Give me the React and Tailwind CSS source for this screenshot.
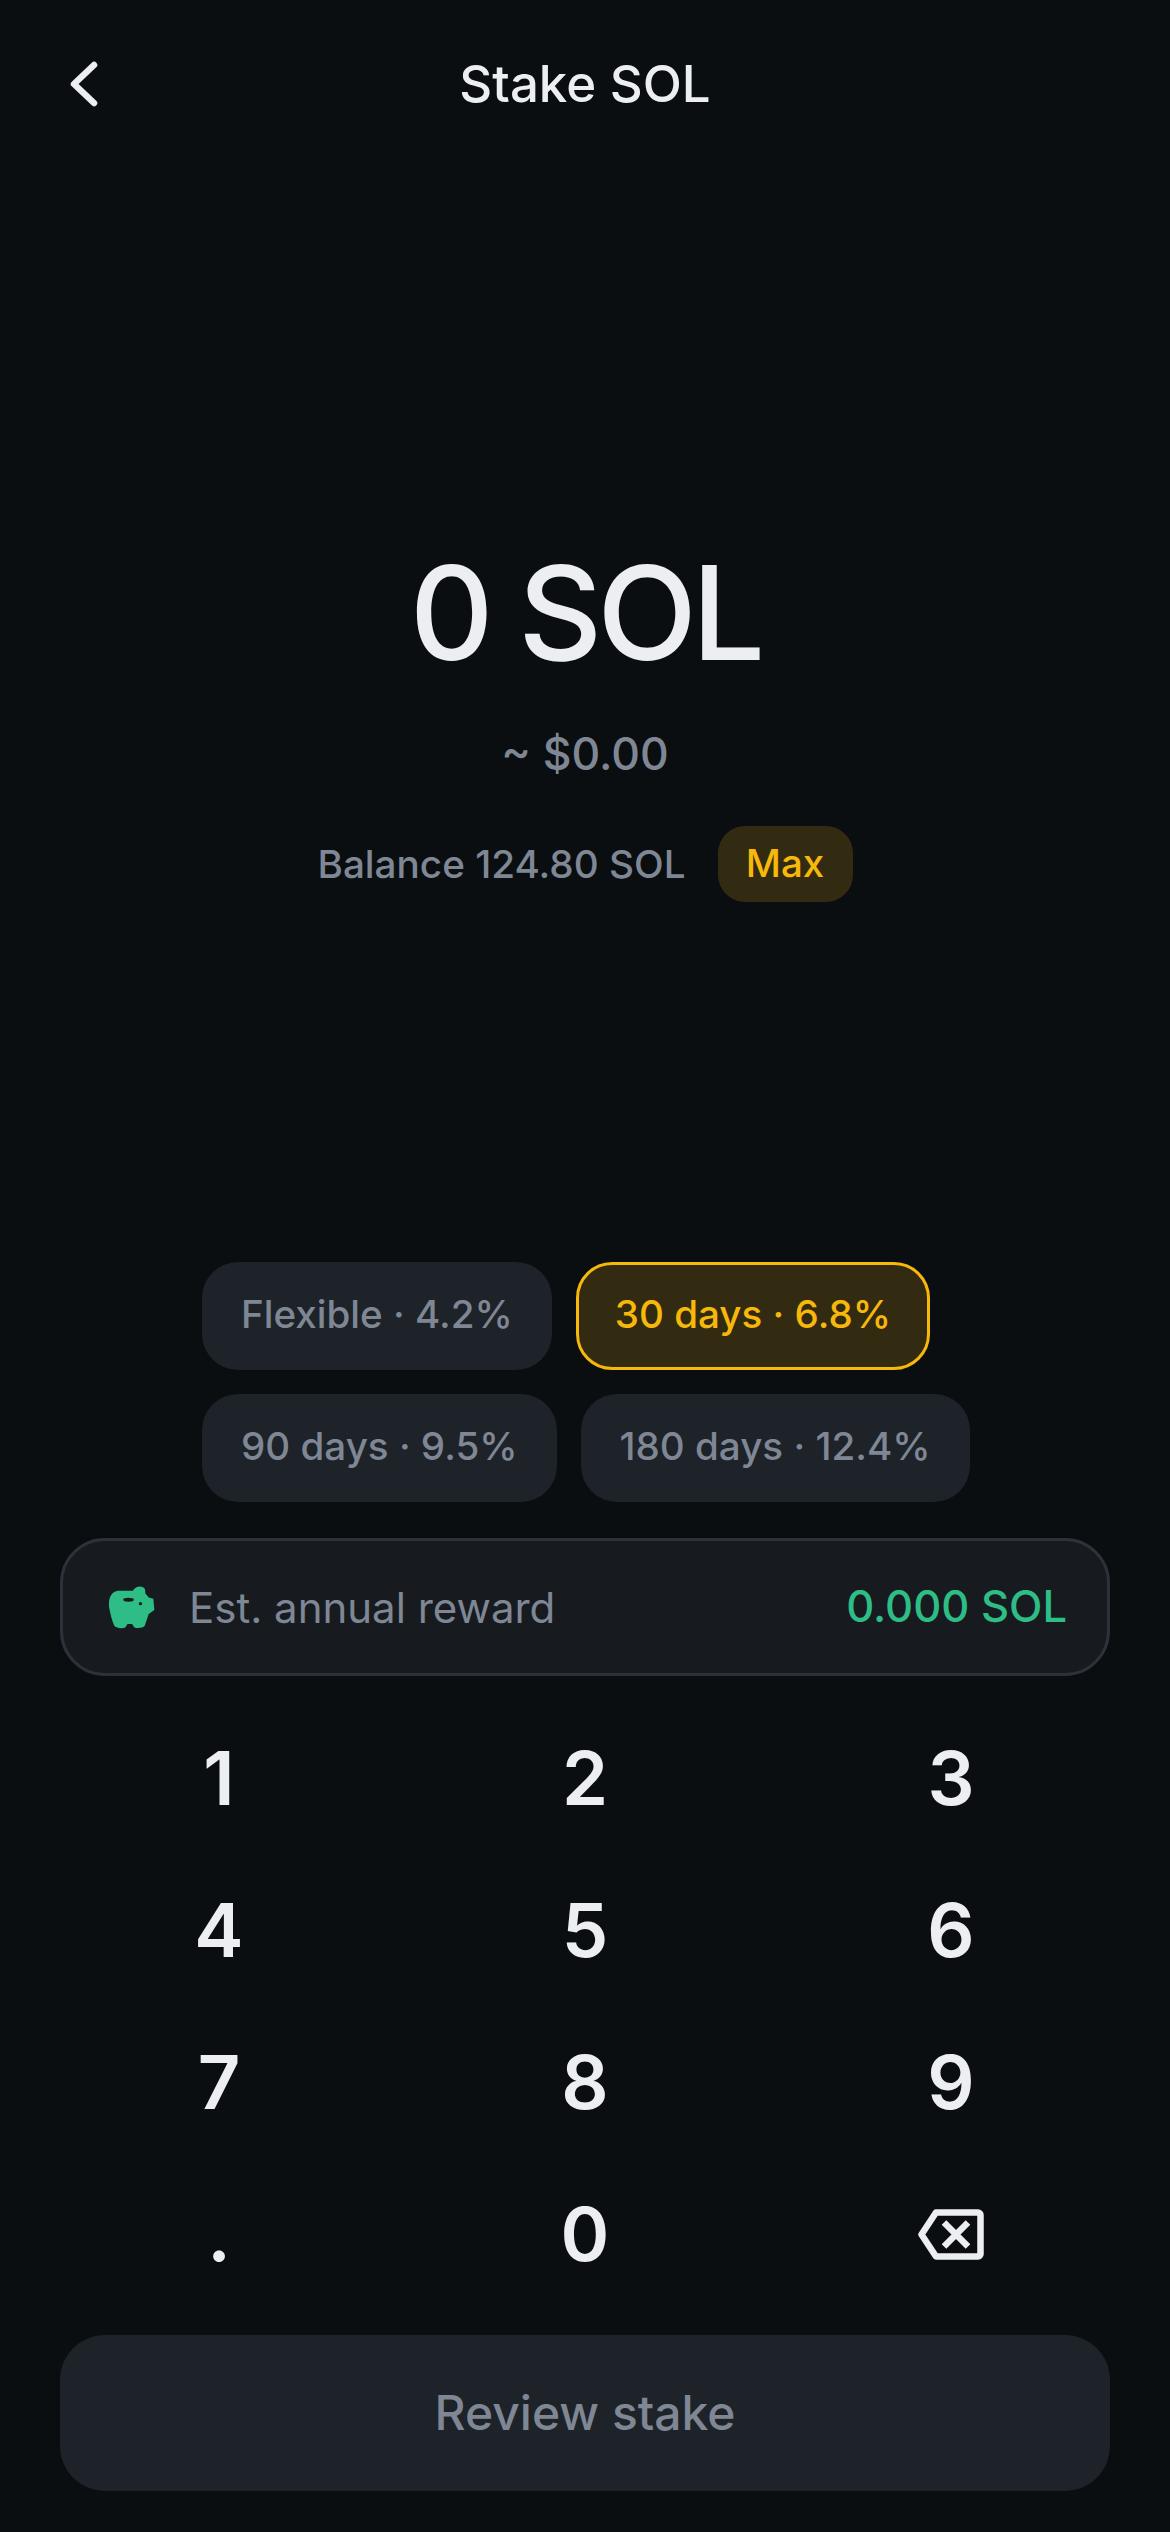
import React from 'react';

const terms = [
  { label: 'Flexible · 4.2%' },
  { label: '30 days · 6.8%', active: true },
  { label: '90 days · 9.5%' },
  { label: '180 days · 12.4%' },
];

const keys = ['1', '2', '3', '4', '5', '6', '7', '8', '9', '.', '0'];

function PiggyIcon() {
  return (
    <svg viewBox="55 25 142 132" className="h-[44px] w-[47px] shrink-0">
      <path
        fill="#2dbd85"
        d="M85 42 L130 42 C138 28 160 24 167 38 L168 50 L178 62 L192 66 L195 100 L178 112 L166 148 C160 156 140 156 134 152 L128 142 L114 142 L108 152 C100 158 80 156 74 148 C66 130 62 110 58 90 C56 60 68 44 85 42 Z"
      />
      <ellipse cx="117" cy="69" rx="16" ry="6" fill="#171b20" />
      <circle cx="153" cy="81" r="5" fill="#171b20" />
    </svg>
  );
}

function BackspaceIcon() {
  return (
    <svg viewBox="0 0 66 51" fill="none" className="h-[51px] w-[66px]">
      <path
        d="M18 3.5 H60 a2.5 2.5 0 0 1 2.5 2.5 V45 a2.5 2.5 0 0 1 -2.5 2.5 H18 L3.5 25.5 Z"
        stroke="#eceef2"
        strokeWidth="6.5"
        strokeLinejoin="round"
      />
      <path d="M26 13.5 L50 37.5 M50 13.5 L26 37.5" stroke="#eceef2" strokeWidth="6.5" />
    </svg>
  );
}

export default function App() {
  return (
    <div className="flex h-[2532px] w-[1170px] flex-col bg-[#0a0e11] font-[family-name:Inter,sans-serif] text-[#eceef2]">
      {/* Header */}
      <div className="flex h-[168px] shrink-0 items-center justify-between px-[70px]">
        <svg viewBox="0 0 28 46" fill="none" className="h-[46px] w-[28px]">
          <path d="M24 4 L4 23 L24 42" stroke="#eceef2" strokeWidth="6.5" strokeLinecap="round" strokeLinejoin="round" />
        </svg>
        <h1 className="text-[51px] font-medium leading-[60px]">Stake SOL</h1>
        <div className="w-[28px]" />
      </div>

      {/* Amount */}
      <div className="mt-[373px] text-center text-[130px] font-medium leading-[144px] tracking-[-5px]">0 SOL</div>
      <div className="mt-[39px] text-center text-[44.5px] font-medium leading-[60px] text-[#7f8794]">~ $0.00</div>
      <div className="mt-[42px] flex items-center justify-center gap-[32px]">
        <span className="text-[38.7px] font-medium text-[#7f8794]">Balance 124.80 SOL</span>
        <button className="flex h-[76px] w-[135px] items-center justify-center rounded-[27px] bg-[#332a12] text-[38.5px] font-medium text-[#f5b80b]">
          Max
        </button>
      </div>

      {/* Lock terms */}
      <div className="ml-[202px] mt-[360px] flex w-[772px] flex-wrap gap-[24px]">
        {terms.map((t) =>
          t.active ? (
            <div
              key={t.label}
              className="flex h-[108px] items-center rounded-[36px] border-[3px] border-[#f5b80b] bg-[#332a12] px-[36px] pb-[2px] text-[38.6px] font-medium text-[#f5b80b]"
            >
              {t.label}
            </div>
          ) : (
            <div
              key={t.label}
              className="flex h-[108px] items-center rounded-[36px] bg-[#1e2229] px-[39px] pb-[2px] text-[38.6px] font-medium text-[#7f8794]"
            >
              {t.label}
            </div>
          )
        )}
      </div>

      {/* Reward */}
      <div className="mx-[60px] mt-[36px] flex h-[138px] shrink-0 items-center rounded-[45px] border-[3px] border-[#2c323a] bg-[#171b20] pl-[45px] pr-[40px]">
        <PiggyIcon />
        <span className="ml-[34px] flex-1 text-[42px] font-normal text-[#7f8794]">Est. annual reward</span>
        <span className="text-[43.5px] font-medium text-[#2dbd85]">0.000 SOL</span>
      </div>

      {/* Keypad */}
      <div className="mx-[36px] mt-[26px] grid grid-cols-3">
        {keys.map((k) => (
          <div key={k} className="flex h-[152px] items-center justify-center text-[74px] font-semibold leading-[152px]">
            {k}
          </div>
        ))}
        <div className="flex h-[152px] items-center justify-center">
          <BackspaceIcon />
        </div>
      </div>

      {/* CTA */}
      <button className="mx-[60px] mt-[25px] flex h-[156px] shrink-0 items-center justify-center rounded-[45px] bg-[#1e2229] text-[48px] font-medium text-[#7f8794]">
        Review stake
      </button>
    </div>
  );
}
